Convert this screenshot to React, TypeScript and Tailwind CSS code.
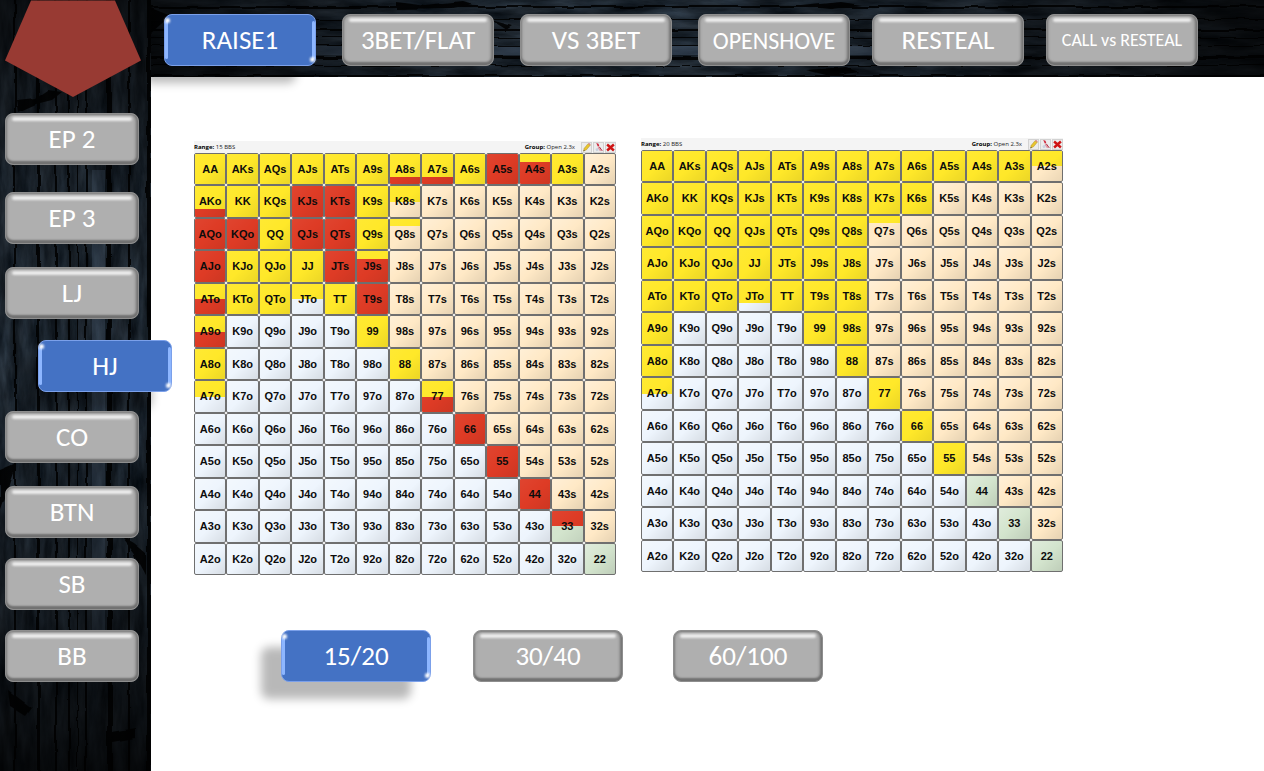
import { useState } from "react";
import clsx from "clsx";

const RANKS = ["A", "K", "Q", "J", "T", "9", "8", "7", "6", "5", "4", "3", "2"];

type Fill = "Y" | "R" | "Y75R" | "Y50R" | "Y25R" | "Y75" | "Y50" | "Y25" | "R50";
type Kind = "suited" | "offsuit" | "pair";

const BASE: Record<Kind, string> = {
  suited: "bg-[#ffe9c6]",
  offsuit: "bg-[#eef5fd]",
  pair: "bg-[#d3e4cd]",
};

const FILL: Record<Fill, string> = {
  Y: "bg-[#ffe829]",
  R: "bg-[#de3b25]",
  Y75R: "bg-linear-to-b from-[#ffe829] from-75% to-[#de3b25] to-75%",
  Y50R: "bg-linear-to-b from-[#ffe829] from-50% to-[#de3b25] to-50%",
  Y25R: "bg-linear-to-b from-[#ffe829] from-25% to-[#de3b25] to-25%",
  Y75: "bg-linear-to-b from-[#ffe829] from-75% to-transparent to-75%",
  Y50: "bg-linear-to-b from-[#ffe829] from-50% to-transparent to-50%",
  Y25: "bg-linear-to-b from-[#ffe829] from-25% to-transparent to-25%",
  R50: "bg-linear-to-b from-[#de3b25] from-50% to-transparent to-50%",
};

function expand(groups: Partial<Record<Fill, string>>): Record<string, Fill> {
  const out: Record<string, Fill> = {};
  for (const [fill, hands] of Object.entries(groups)) {
    for (const hand of hands.split(" ")) out[hand] = fill as Fill;
  }
  return out;
}

const RANGE_15 = expand({
  Y: "AA AKs AQs AJs ATs A9s A6s A3s KK KQs K9s QQ Q9s KJo QJo JJ KTo QTo TT 99 A8o 88",
  R: "A5s KJs KTs AQo KQo QJs QTs AJo JTs T9s 66 55 44",
  Y75R: "A8s A7s AKo",
  Y50R: "ATo A9o 77",
  Y25R: "A4s J9s",
  Y50: "K8s JTo A7o",
  Y25: "Q8s",
  R50: "33",
});

const RANGE_20 = expand({
  Y: "AA AKs AQs AJs ATs A9s A8s A7s A6s A5s A4s A3s AKo KK KQs KJs KTs K9s K8s K7s K6s AQo KQo QQ QJs QTs Q9s Q8s AJo KJo QJo JJ JTs J9s J8s ATo KTo QTo TT T9s T8s A9o 99 98s A8o 88 77 66 55",
  Y75: "JTo",
  Y50: "A2s A7o",
  Y25: "Q7s",
});

function handAt(row: number, col: number): { name: string; kind: Kind } {
  if (row === col) return { name: RANKS[row] + RANKS[row], kind: "pair" };
  if (row < col) return { name: RANKS[row] + RANKS[col] + "s", kind: "suited" };
  return { name: RANKS[col] + RANKS[row] + "o", kind: "offsuit" };
}

function ToolButton({ label, children }: { label: string; children: React.ReactNode }) {
  return (
    <button
      type="button"
      aria-label={label}
      className="flex h-[11px] w-[11px] items-center justify-center border border-[#d2d2d2] bg-[#ececec]"
    >
      <svg viewBox="0 0 12 12" className="h-[9px] w-[9px] shrink-0">
        {children}
      </svg>
    </button>
  );
}

function RangeChart({ stack, cells }: { stack: string; cells: Record<string, Fill> }) {
  return (
    <section className="w-[422px]">
      <header className="flex h-3 items-center bg-[#f4f4f4] font-['Open_Sans',sans-serif] text-[6px] leading-3 text-[#222]">
        <p className="flex-1">
          <b className="text-black">Range:</b> {stack}
        </p>
        <p className="mr-[6px]">
          <b className="text-black">Group:</b> Open 2.3x
        </p>
        <div className="flex gap-px">
          <ToolButton label="Edit">
            <path d="M2 11l1-4 5-6 3 2-5 6z" fill="#e9c52f" stroke="#a88a2a" strokeWidth=".6" />
            <path d="M8 1l3 2 .5-1.500-2-1.500z" fill="#d87b7b" />
            <path d="M2 11l.5-2 1.300 1z" fill="#444" />
          </ToolButton>
          <ToolButton label="Clear">
            <path d="M3 0l3 1 1 3-2 .5z" fill="#d0283c" />
            <path d="M6 4l4 6-2 1-3-4z" fill="#e0a0aa" />
            <path d="M2 8l3-2 1 4-3 1z" fill="#c9d1df" />
            <path d="M7 5l4 5.500" stroke="#b02a40" strokeWidth="1.300" />
          </ToolButton>
          <ToolButton label="Delete">
            <path d="M1.500 2l9 8M10.500 2l-9 8" stroke="#cf1414" strokeWidth="3.200" />
          </ToolButton>
        </div>
      </header>
      <table className="block">
        <tbody className="grid h-[422px] grid-cols-13 grid-rows-13">
          {RANKS.map((_, row) => (
            <tr key={row} className="contents">
              {RANKS.map((_, col) => {
                const { name, kind } = handAt(row, col);
                const fill = cells[name];
                return (
                  <td
                    key={name}
                    className={clsx(
                      "flex overflow-hidden rounded-[2px] border border-[#6f6f6f] p-0",
                      BASE[kind],
                    )}
                  >
                    <span className={clsx("flex flex-1", fill && FILL[fill])}>
                      <span
                        className={clsx(
                          "flex flex-1 items-center justify-center bg-linear-to-br text-[11px] font-bold text-[#0c0c0c]",
                          fill
                            ? "from-white/5 via-black/0 to-black/8"
                            : "from-white/30 via-black/0 to-black/10",
                        )}
                      >
                        {name}
                      </span>
                    </span>
                  </td>
                );
              })}
            </tr>
          ))}
        </tbody>
      </table>
    </section>
  );
}

interface BevelButtonProps {
  label: string;
  active: boolean;
  onClick: () => void;
  className?: string;
}

function BevelButton({ label, active, onClick, className }: BevelButtonProps) {
  return (
    <button
      type="button"
      aria-pressed={active}
      onClick={onClick}
      className={clsx(
        "relative h-[52px] shrink-0 rounded-lg border pt-px whitespace-nowrap text-white",
        active
          ? "border-[#7ba0ea] bg-[#4472c4] shadow-[-20px_17px_10px_rgba(0,0,0,0.28)]"
          : "border-[#8e8e8e] bg-[#afafaf] shadow-[inset_0_1px_2px_#808080,inset_0_-3px_2px_#707070,inset_2px_0_3px_-1px_#8c8c8c,inset_-3px_0_3px_-1px_#707070]",
        className,
      )}
    >
      {active ? (
        <>
          <span className="absolute top-[6px] bottom-[6px] left-0 w-[3px] rounded-sm bg-[#8db6ff]" />
          <span className="absolute top-[6px] right-0 bottom-[6px] w-[3px] rounded-sm bg-[#8db6ff]" />
          <span className="absolute top-[3px] left-0 size-[5px] rounded-full bg-white blur-[1px]" />
          <span className="absolute right-0 bottom-[3px] size-[5px] rounded-full bg-white blur-[1px]" />
        </>
      ) : (
        <span className="absolute inset-x-[6px] top-[3px] h-[4px] rounded-sm bg-[#ececec] blur-[1px]" />
      )}
      <span className="relative">{label}</span>
    </button>
  );
}

function Wood({ vertical }: { vertical: boolean }) {
  const id = vertical ? "v" : "h";
  const seams = vertical
    ? [
        [14, 2], [37, 3], [55, 2], [68, 2], [77, 1], [85, 2], [107, 5], [128, 2], [147, 4],
      ]
    : [
        [6, 2], [19, 1], [29, 2], [37, 1], [45, 1], [56, 3], [65, 1], [75, 2],
      ];
  return (
    <svg
      aria-hidden="true"
      preserveAspectRatio="none"
      viewBox={vertical ? "0 0 151 771" : "0 0 1113 77"}
      className="absolute inset-0 h-full w-full"
    >
      <defs>
        <filter
          id={"grain-" + id}
          x="0"
          y="0"
          width="100%"
          height="100%"
          colorInterpolationFilters="sRGB"
        >
          <feTurbulence
            type="fractalNoise"
            baseFrequency={vertical ? "0.09 0.02" : "0.02 0.09"}
            numOctaves={5}
            seed={7}
          />
          <feColorMatrix values="0.220 0 0 0 -0.005  0.250 0.020 0 0 0.005  0.280 0.040 0 0 0.015  0 0 0 0 1" />
        </filter>
        <filter id={"rough-" + id} x="-5%" y="-5%" width="110%" height="110%">
          <feTurbulence type="fractalNoise" baseFrequency="0.04" numOctaves={2} seed={3} result="n" />
          <feDisplacementMap in="SourceGraphic" in2="n" scale={5} xChannelSelector="R" yChannelSelector="G" />
        </filter>
        <linearGradient id={"shade-" + id} x1="0" y1="0" x2={vertical ? 0 : 1} y2={vertical ? 1 : 0}>
          <stop offset="0" stopColor="#000" stopOpacity=".65" />
          <stop offset=".25" stopColor="#000" stopOpacity=".15" />
          <stop offset=".5" stopColor="#000" stopOpacity="0" />
          <stop offset=".75" stopColor="#000" stopOpacity=".3" />
          <stop offset="1" stopColor="#000" stopOpacity=".75" />
        </linearGradient>
      </defs>
      <rect width="100%" height="100%" fill="#10151b" />
      <rect width="100%" height="100%" filter={`url(#grain-${id})`} />
      {vertical ? (
        <rect x="92" y="170" width="13" height="460" fill="#52677f" opacity=".3" />
      ) : (
        <rect x="130" y="46" width="620" height="9" fill="#52677f" opacity=".4" />
      )}
      <g filter={`url(#rough-${id})`} fill="#000" opacity=".85">
        {seams.map(([at, size]) =>
          vertical ? (
            <rect key={at} x={at} y="-5" width={size} height="781" />
          ) : (
            <rect key={at} x="-5" y={at} width="1123" height={size} />
          ),
        )}
        {vertical ? (
          <>
            <path d="M16 100l20-2 12-8 14 2-10 8-16 4-18 8z" />
            <path d="M0 470l14-6v8L0 512z M120 535l14 8 12 10v22l-12-22z" />
            <path d="M8 690l24 18-6 8-16-10z M112 732l24-4v10l-24 4z" />
          </>
        ) : (
          <>
            <path d="M245 2l30 4 36-4 10 3-20 4-56 1z M340 20l22 6-6 4z" />
            <path d="M650 6l40-4 20 3-30 4z M655 70l40-3 14 5-30 4z" />
            <path d="M0 8l20 8-20 18z" />
          </>
        )}
      </g>
      <rect width="100%" height="100%" fill={`url(#shade-${id})`} />
    </svg>
  );
}

const ACTIONS = [
  { label: "RAISE1", style: "text-[27px]" },
  { label: "3BET/FLAT", style: "ml-[26px] text-[27px]" },
  { label: "VS 3BET", style: "ml-[26px] text-[27px]" },
  { label: "OPENSHOVE", style: "ml-[26px] text-[24px]" },
  { label: "RESTEAL", style: "ml-[22px] text-[27px]" },
  { label: "CALL vs RESTEAL", style: "ml-[22px] text-[18px]" },
];

const POSITIONS = [
  { label: "EP 2", style: "mt-4" },
  { label: "EP 3", style: "mt-[27px]" },
  { label: "LJ", style: "mt-[23px]" },
  { label: "HJ", style: "mt-[21px]" },
  { label: "CO", style: "mt-[19px]" },
  { label: "BTN", style: "mt-[23px]" },
  { label: "SB", style: "mt-[20px]" },
  { label: "BB", style: "mt-[20px]" },
];

const STACKS = [
  { label: "15/20", style: "" },
  { label: "30/40", style: "ml-[42px]" },
  { label: "60/100", style: "ml-[50px]" },
];

export default function App() {
  const [action, setAction] = useState("RAISE1");
  const [position, setPosition] = useState("HJ");
  const [stack, setStack] = useState("15/20");

  return (
    <div className="flex min-h-screen bg-white font-['Carlito','Lato',sans-serif]">
      <aside className="relative z-20 w-[151px] shrink-0 bg-black">
        <Wood vertical />
        <nav aria-label="Position" className="relative flex flex-col items-start pl-[5px]">
          <svg viewBox="0 0 136 97" className="h-[97px] w-[136px]" aria-hidden="true">
            <path d="M26 0.500H110L136 60.500L68 97L0 60.500z" fill="#983a33" />
          </svg>
          {POSITIONS.map(({ label, style }) => (
            <BevelButton
              key={label}
              label={label}
              active={position === label}
              onClick={() => setPosition(label)}
              className={clsx("w-[134px] text-[27px]", style, position === label && "ml-[33px]")}
            />
          ))}
        </nav>
      </aside>

      <div className="min-w-0 flex-1">
        <header className="relative z-10 h-[77px] bg-black">
          <Wood vertical={false} />
          <nav aria-label="Action" className="relative flex pt-[14px] pl-[13px]">
            {ACTIONS.map(({ label, style }) => (
              <BevelButton
                key={label}
                label={label}
                active={action === label}
                onClick={() => setAction(label)}
                className={clsx("w-[152px]", style)}
              />
            ))}
          </nav>
        </header>

        <main className="pt-[61px]">
          <div className="flex items-start gap-[25px] pl-[43px] font-['Liberation_Sans',Arial,sans-serif]">
            <div className="mt-[3px]">
              <RangeChart stack="15 BBS" cells={RANGE_15} />
            </div>
            <RangeChart stack="20 BBS" cells={RANGE_20} />
          </div>
          <nav aria-label="Stack size" className="mt-[55px] flex pl-[130px]">
            {STACKS.map(({ label, style }) => (
              <BevelButton
                key={label}
                label={label}
                active={stack === label}
                onClick={() => setStack(label)}
                className={clsx("w-[150px] text-[27px]", style)}
              />
            ))}
          </nav>
        </main>
      </div>
    </div>
  );
}
